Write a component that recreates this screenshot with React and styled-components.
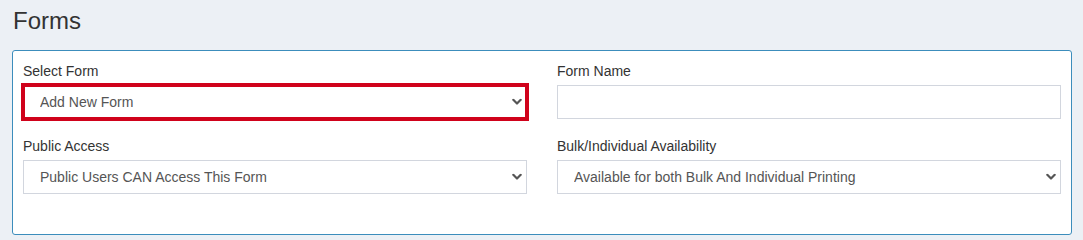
import React from 'react'
import styled, { createGlobalStyle } from 'styled-components'

const GlobalStyle = createGlobalStyle`
  html, body {
    margin: 0;
    padding: 0;
    background: #ecf0f5;
    font-family: 'Liberation Sans', Arial, sans-serif;
    color: #333;
  }
`

const fields = [
  {
    label: 'Select Form',
    type: 'select',
    value: 'Add New Form',
    highlight: true,
  },
  { label: 'Form Name', type: 'input' },
  {
    label: 'Public Access',
    type: 'select',
    value: 'Public Users CAN Access This Form',
  },
  {
    label: 'Bulk/Individual Availability',
    type: 'select',
    value: 'Available for both Bulk And Individual Printing',
  },
]

const Chevron = () => (
  <ChevronIcon width='10' height='7' viewBox='0 0 10 7'>
    <path
      d='M1.3 1.3 L5 5 L8.7 1.3'
      fill='none'
      stroke='#555'
      strokeWidth='2.2'
      strokeLinecap='round'
      strokeLinejoin='round'
    />
  </ChevronIcon>
)

const App = () => {
  return (
    <Page>
      <GlobalStyle />
      <Title>Forms</Title>
      <Card>
        <Grid>
          {fields.map((field) => (
            <Group key={field.label}>
              <Label>{field.label}</Label>
              {field.type === 'select' ? (
                <SelectWrap>
                  <Select $highlight={field.highlight} defaultValue={field.value}>
                    <option>{field.value}</option>
                  </Select>
                  <Chevron />
                </SelectWrap>
              ) : (
                <Input type='text' />
              )}
            </Group>
          ))}
        </Grid>
      </Card>
    </Page>
  )
}

const Page = styled.div`
  padding: 8px 11px 0 12px;
`

const Title = styled.h1`
  margin: 0 0 16px 1px;
  font-size: 24px;
  font-weight: 400;
  line-height: 26px;
  color: #333;
`

const Card = styled.div`
  background: #fff;
  border: 1px solid #3c8dbc;
  border-radius: 3px;
  padding: 10px 10px 40px 10px;
`

const Grid = styled.div`
  display: grid;
  grid-template-columns: 1fr 1fr;
  column-gap: 30px;
  row-gap: 17px;
`

const Group = styled.div`
  display: flex;
  flex-direction: column;
`

const Label = styled.label`
  font-size: 14px;
  line-height: 20px;
  margin-bottom: 4px;
  color: #333;
`

const SelectWrap = styled.div`
  position: relative;
`

const Select = styled.select`
  appearance: none;
  display: block;
  width: 100%;
  height: 34px;
  box-sizing: border-box;
  padding: 0 30px 0 16px;
  font-family: 'Liberation Sans', Arial, sans-serif;
  font-size: 14px;
  color: #555;
  background: #fff;
  border: ${(p) => (p.$highlight ? '2px solid #d0021b' : '1px solid #d2d6de')};
  box-shadow: ${(p) => (p.$highlight ? '0 0 0 2px #d0021b' : 'none')};
  padding-left: ${(p) => (p.$highlight ? '15px' : '16px')};
  border-radius: 0;
  outline: none;
`

const ChevronIcon = styled.svg`
  position: absolute;
  right: 5px;
  top: 50%;
  transform: translateY(-50%);
  pointer-events: none;
`

const Input = styled.input`
  display: block;
  width: 100%;
  height: 34px;
  box-sizing: border-box;
  padding: 0 12px;
  font-family: 'Liberation Sans', Arial, sans-serif;
  font-size: 14px;
  color: #555;
  border: 1px solid #d2d6de;
  border-radius: 0;
  outline: none;
`

export default App
